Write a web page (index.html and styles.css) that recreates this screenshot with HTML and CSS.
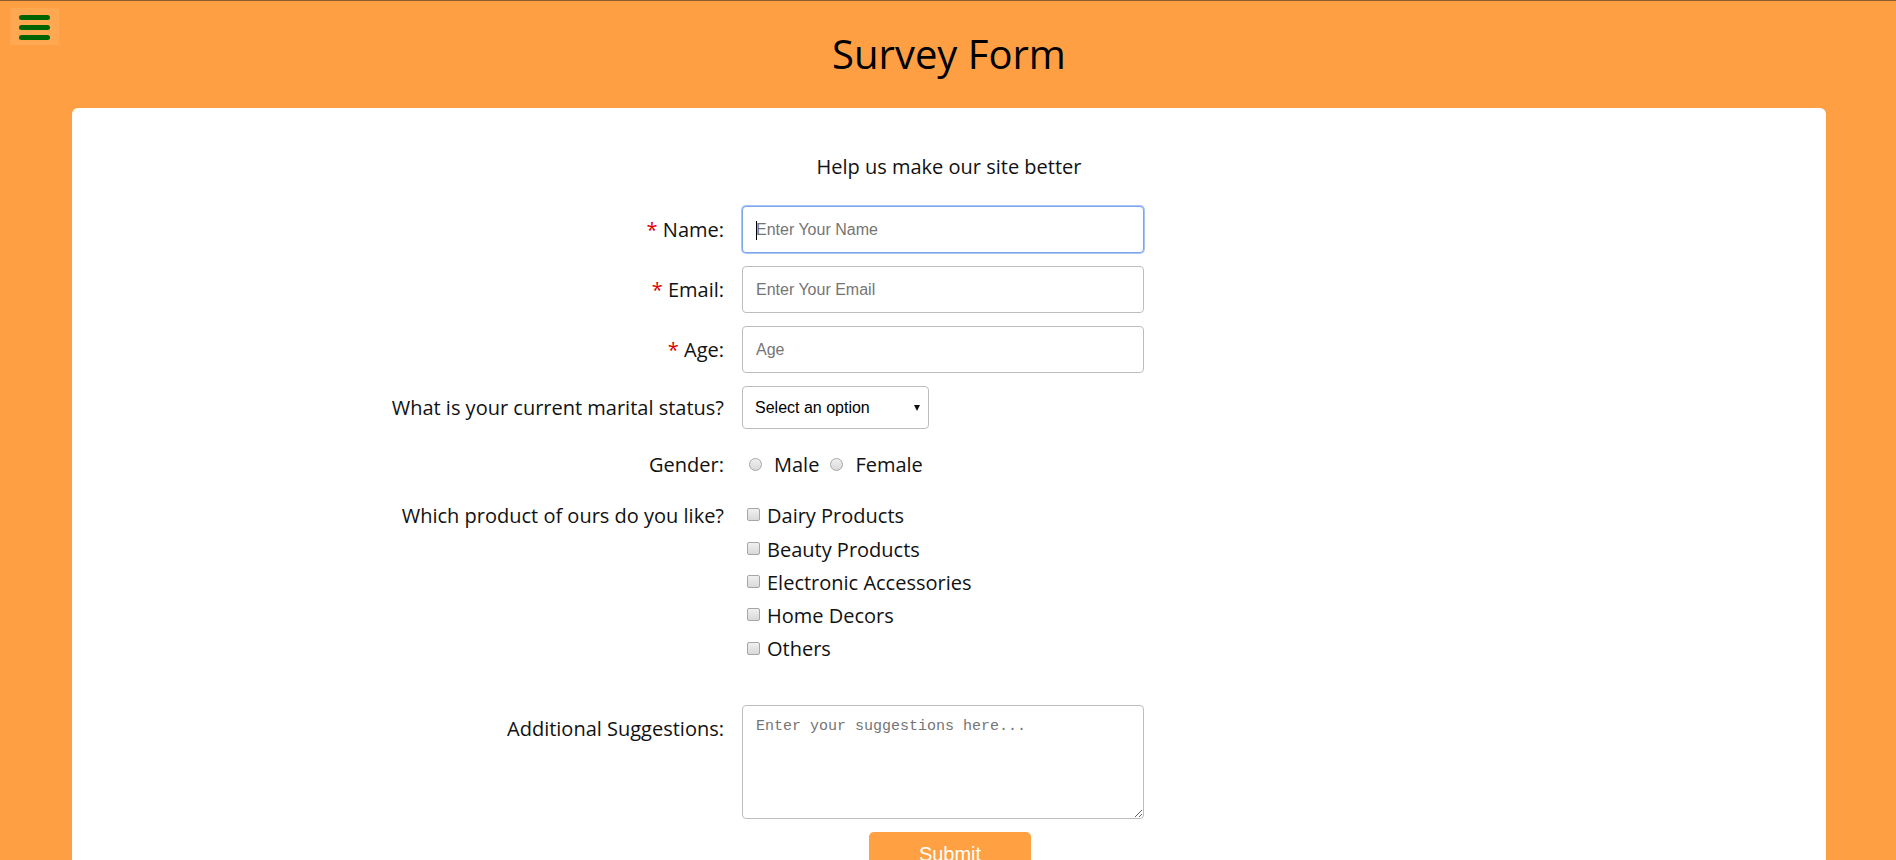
FILE: index.html
```html
<!DOCTYPE html>
<html lang="en">
<head>
<meta charset="utf-8">
<title>Survey Form</title>
<link rel="stylesheet" href="styles.css">
</head>
<body>
  <button class="menu-toggle" type="button" aria-label="Menu">
    <span class="bar"></span><span class="bar"></span><span class="bar"></span>
  </button>
  <header class="page-header">
    <h1 class="title">Survey Form</h1>
  </header>
  <main class="card">
    <p class="intro">Help us make our site better</p>
    <form class="survey">
      <div class="row row-center">
        <label class="field-label" for="name"><span class="req">*</span> Name:</label>
        <div class="control caret-wrap">
          <input class="text-input is-focused" id="name" type="text" placeholder="Enter Your Name">
          <span class="caret"></span>
        </div>
      </div>
      <div class="row row-center">
        <label class="field-label" for="email"><span class="req">*</span> Email:</label>
        <div class="control">
          <input class="text-input" id="email" type="email" placeholder="Enter Your Email">
        </div>
      </div>
      <div class="row row-center">
        <label class="field-label" for="age"><span class="req">*</span> Age:</label>
        <div class="control">
          <input class="text-input" id="age" type="number" placeholder="Age">
        </div>
      </div>
      <div class="row row-center">
        <label class="field-label" for="status">What is your current marital status?</label>
        <div class="control">
          <div class="select-wrap">
            <select class="select" id="status">
              <option>Select an option</option>
              <option>Single</option>
              <option>Married</option>
            </select>
          </div>
        </div>
      </div>
      <div class="row row-center row-gender">
        <span class="field-label">Gender:</span>
        <div class="control radios">
          <label class="radio-item"><input class="radio" type="radio" name="gender"><span>Male</span></label>
          <label class="radio-item"><input class="radio" type="radio" name="gender"><span>Female</span></label>
        </div>
      </div>
      <div class="row row-top">
        <span class="field-label label-list">Which product of ours do you like?</span>
        <div class="control checks">
          <label class="check-item"><input class="check" type="checkbox"><span>Dairy Products</span></label>
          <label class="check-item"><input class="check" type="checkbox"><span>Beauty Products</span></label>
          <label class="check-item"><input class="check" type="checkbox"><span>Electronic Accessories</span></label>
          <label class="check-item"><input class="check" type="checkbox"><span>Home Decors</span></label>
          <label class="check-item"><input class="check" type="checkbox"><span>Others</span></label>
        </div>
      </div>
      <div class="row row-top row-suggest">
        <label class="field-label label-suggest" for="suggest">Additional Suggestions:</label>
        <div class="control">
          <textarea class="textarea" id="suggest" placeholder="Enter your suggestions here..."></textarea>
        </div>
      </div>
      <div class="submit-row">
        <button class="submit" type="submit">Submit</button>
      </div>
    </form>
  </main>
</body>
</html>
```
FILE: styles.css
```css
* { box-sizing: border-box; }

html, body { height: 100%; }

body {
  margin: 0;
  background: #ff9f43;
  border-top: 1px solid #8f5c2c;
  font-family: "Open Sans", "Liberation Sans", sans-serif;
  font-size: 20px;
  color: #111;
  overflow: hidden;
}

.menu-toggle {
  position: absolute;
  top: 8px;
  left: 10px;
  width: 49px;
  height: 37px;
  padding: 7px 0 0 9px;
  border: none;
  background: #ffa851;
  display: flex;
  flex-direction: column;
  gap: 5px;
  cursor: pointer;
}

.menu-toggle .bar {
  display: block;
  width: 31px;
  height: 5px;
  border-radius: 3px;
  background: #006400;
}

.page-header {
  padding: 25px 0 27px;
}

.title {
  margin: 0;
  text-align: center;
  font-size: 40px;
  font-weight: 400;
  line-height: normal;
  color: #000;
  padding-left: 2px;
}

.card {
  margin: 0 70px 0 72px;
  background: #fff;
  border-radius: 6px;
  padding: 45px 0 40px;
  min-height: 800px;
}

.intro {
  margin: 0 0 26px;
  text-align: center;
  line-height: 27.2px;
  color: #111;
}

.survey {
  display: flex;
  flex-direction: column;
  gap: 13px;
}

.row {
  display: grid;
  grid-template-columns: 652px 402px;
  column-gap: 18px;
}

.row-center { align-items: center; }
.row-top { align-items: start; }
.row-gender { min-height: 44px; }
.row-suggest { margin-top: 26px; }

.field-label {
  text-align: right;
  line-height: 27.2px;
}

.label-list { line-height: 33.3px; }
.label-suggest { padding-top: 10px; }

.req { color: #e00000; }

.control { position: relative; }

.text-input {
  display: block;
  width: 402px;
  height: 47px;
  padding: 0 13px;
  border: 1px solid #bdbdbd;
  border-radius: 4px;
  font-family: "Liberation Sans", Arial, sans-serif;
  font-size: 16px;
  color: #222;
  background: #fff;
  outline: none;
}

.text-input::placeholder { color: #757575; }

.text-input.is-focused {
  border-color: #7ba6ec;
  box-shadow: 0 0 0 1px #a8c5f4;
}

.caret {
  position: absolute;
  left: 14px;
  top: 15px;
  width: 1px;
  height: 19px;
  background: #000;
}

.select-wrap {
  position: relative;
  width: 187px;
}

.select-wrap::after {
  content: "";
  position: absolute;
  right: 9px;
  top: 19px;
  border-left: 3.5px solid transparent;
  border-right: 3.5px solid transparent;
  border-top: 6px solid #111;
  pointer-events: none;
}

.select {
  display: block;
  width: 187px;
  height: 43px;
  padding: 0 24px 0 12px;
  border: 1px solid #bdbdbd;
  border-radius: 4px;
  background: #fff;
  font-family: "Liberation Sans", Arial, sans-serif;
  font-size: 16px;
  color: #000;
  -webkit-appearance: none;
  appearance: none;
  outline: none;
}

.radios {
  display: flex;
  align-items: center;
  padding-left: 7px;
}

.radio-item {
  display: flex;
  align-items: center;
  line-height: 27.2px;
  margin-right: 11px;
}

.radio-item span { margin-left: 12px; }

.radio,
.check {
  -webkit-appearance: none;
  appearance: none;
  width: 13px;
  height: 13px;
  margin: 0;
  border: 1px solid #a6a6a6;
  background: linear-gradient(#f0f0f0, #d9d9d9);
  flex: none;
}

.radio { border-radius: 50%; }
.check { border-radius: 2px; }

.checks {
  display: flex;
  flex-direction: column;
  padding-left: 5px;
}

.check-item {
  display: flex;
  align-items: center;
  line-height: 33.3px;
}

.check-item .check { margin-top: -2px; }
.check-item span { margin-left: 7px; }

.textarea {
  display: block;
  width: 402px;
  height: 114px;
  padding: 12px 13px;
  border: 1px solid #bdbdbd;
  border-radius: 4px;
  font-family: "Liberation Mono", monospace;
  font-size: 15px;
  color: #222;
  resize: both;
  outline: none;
}

.textarea::placeholder { color: #757575; }

.submit-row {
  display: flex;
  justify-content: center;
  padding-left: 2px;
}

.submit {
  width: 162px;
  padding: 11px 0 10px;
  border: none;
  border-radius: 5px;
  background: #ffa043;
  color: #fff;
  font-family: "Liberation Sans", Arial, sans-serif;
  font-size: 20px;
  line-height: 23px;
  cursor: pointer;
}
```
